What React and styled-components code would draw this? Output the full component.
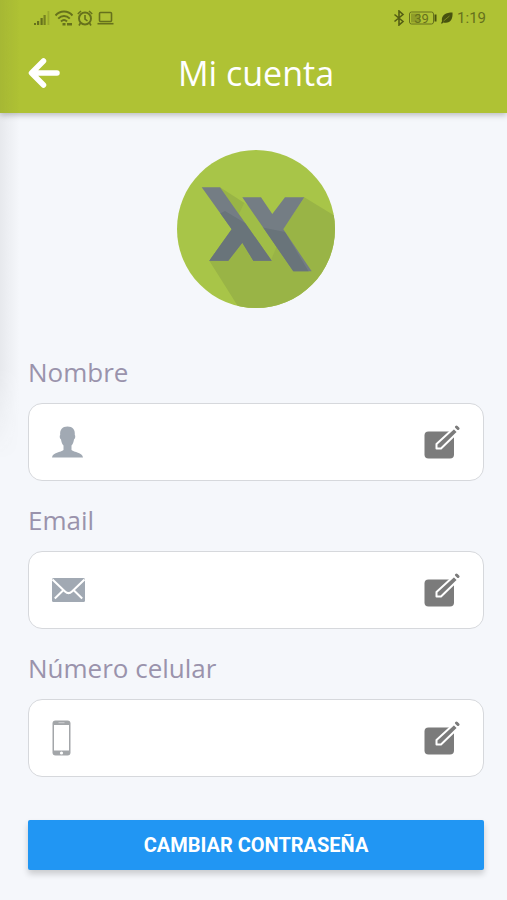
import React, { useState } from 'react';
import styled, { createGlobalStyle } from 'styled-components';

const GlobalStyle = createGlobalStyle`
  * { box-sizing: border-box; }
  body {
    margin: 0;
    background: #f5f7fb;
    font-family: 'Open Sans', 'Noto Sans', sans-serif;
  }
`;

const Page = styled.div`
  position: relative;
  min-height: 100vh;
`;

const DrawerShade = styled.div`
  position: absolute;
  left: 0;
  top: 0;
  width: 20px;
  height: 460px;
  pointer-events: none;
  background: linear-gradient(to right, rgba(60, 60, 60, 0.07), rgba(60, 60, 60, 0));
  mask-image: linear-gradient(to bottom, #000 80%, transparent);
`;

const Header = styled.header`
  height: 113px;
  background: #afc234;
  box-shadow: 0 2px 6px rgba(0, 0, 0, 0.25);
`;

const StatusBar = styled.div`
  display: flex;
  justify-content: space-between;
  align-items: center;
  height: 36px;
  padding: 0 21px 0 34px;
  color: #66711c;
  font-family: Roboto, sans-serif;
  font-size: 15px;
`;

const StatusGroup = styled.div`
  display: flex;
  align-items: center;
  gap: 4px;

  svg { display: block; }
`;

const TitleBar = styled.div`
  display: grid;
  grid-template-columns: 32px 1fr 32px;
  align-items: center;
  height: 74px;
  padding: 0 23px 0 28px;
`;

const BackButton = styled.button`
  padding: 0;
  border: 0;
  background: none;
  cursor: pointer;

  svg { display: block; }
`;

const Title = styled.h1`
  margin: 0;
  color: #fff;
  font-size: 34px;
  font-weight: 400;
  line-height: 44px;
  text-align: center;
`;

const Main = styled.main`
  padding: 37px 23px 28px 28px;
`;

const Profile = styled.div`
  display: flex;
  flex-direction: column;
  align-items: center;
  height: 204px;
`;

const Form = styled.form`
  display: flex;
  flex-direction: column;
`;

const Field = styled.div`
  margin-bottom: 21px;
`;

const Label = styled.label`
  display: block;
  margin-bottom: 13px;
  color: #9a93ac;
  font-size: 26px;
  line-height: 36px;
`;

const InputBox = styled.div`
  display: flex;
  align-items: center;
  height: 78px;
  padding: 0 23px;
  border: 1px solid #d6d8dc;
  border-radius: 14px;
  background: #fff;

  svg { display: block; flex: none; }
`;

const Input = styled.input`
  flex: 1;
  min-width: 0;
  height: 48px;
  padding: 0 16px;
  border: 0;
  outline: 0;
  background: none;
  color: #55596a;
  font: inherit;
  font-size: 22px;
`;

const EditButton = styled.button`
  padding: 0;
  border: 0;
  background: none;
  cursor: pointer;
`;

const SubmitButton = styled.button`
  height: 50px;
  margin-top: 22px;
  padding: 0 16px;
  border: 0;
  border-radius: 2px;
  background: #2196f3;
  box-shadow: 0 4px 6px rgba(0, 0, 0, 0.18);
  color: #fff;
  font-family: Roboto, sans-serif;
  font-size: 20px;
  font-weight: 700;
  text-transform: uppercase;
  cursor: pointer;
`;

const SignalIcon = () => (
  <svg width="17" height="16" viewBox="0 0 17 16" fill="currentColor">
    <path d="M0 13h2v2H0zM3 11h2.200v4H3zM6.500 8h2.200v7H6.500z" />
    <path d="M9.500 5h2.200v10H9.500z" opacity="0.8" />
    <path d="M13.500 1h1.800v14h-1.800z" opacity="0.3" />
  </svg>
);

const WifiIcon = () => (
  <svg width="18" height="16" viewBox="0 0 18 16" fill="none" stroke="currentColor" strokeWidth="2">
    <path d="M0.500 5.500C5 0 13 0 17.500 5.500" />
    <path d="M3.200 8.600c3.400-3.600 8.200-3.600 11.600 0" />
    <path d="M6 11.500c1.800-1.800 4.200-1.800 6 0" />
    <path d="M7.500 14.200h3M12 14.200h5" strokeWidth="2.400" />
  </svg>
);

const AlarmIcon = () => (
  <svg width="16" height="16" viewBox="0 0 16 16" fill="none" stroke="currentColor" strokeWidth="1.900">
    <circle cx="8" cy="8.500" r="6" />
    <path d="M8 5v4l2.500 2M0.800 4l3.200-3M15.200 4L12 1M3.500 13l-1.500 2.500M12.500 13l1.500 2.500" strokeWidth="1.600" />
  </svg>
);

const LaptopIcon = () => (
  <svg width="17" height="14" viewBox="0 0 17 14" fill="none" stroke="currentColor" strokeWidth="1.600">
    <rect x="2.500" y="1.500" width="12" height="9" rx="1" />
    <path d="M0.500 12.700h16" />
  </svg>
);

const BluetoothIcon = () => (
  <svg width="12" height="16" viewBox="0 0 12 16" fill="none" stroke="#545e14" strokeWidth="1.600">
    <path d="M1.500 4.500l8.500 7L6 15V1l4 3.500-8.500 7" />
  </svg>
);

const BatteryIcon = () => (
  <svg width="28" height="14" viewBox="0 0 28 14">
    <rect x="0.500" y="1" width="24" height="12" rx="2" fill="none" stroke="currentColor" />
    <rect x="2" y="2.500" width="9" height="9" fill="currentColor" opacity="0.45" />
    <path d="M25.500 3.500h2v7h-2z" fill="#48520f" />
    <text x="12.500" y="11.500" textAnchor="middle" fontSize="13" fill="currentColor">39</text>
  </svg>
);

const LeafIcon = () => (
  <svg width="12" height="12" viewBox="0 0 12 12">
    <path d="M11.500 0.500C5 0.500 0 3 1 9.200L0 11.300l1 .5 1.300-1.300C9.500 12 12 7 11.500 0.500z" fill="#48520f" />
    <path d="M2.500 9L8.500 4" stroke="#afc234" strokeWidth="0.500" />
  </svg>
);

const BackIcon = () => (
  <svg width="32" height="32" viewBox="0 0 32 32" fill="none" stroke="#fff" strokeWidth="5.500" strokeLinecap="round" strokeLinejoin="round">
    <path d="M15.500 4L3.500 16l12 12M4 16h25" />
  </svg>
);

const Logo = () => (
  <svg width="158" height="158" viewBox="0 0 158 158" role="img" aria-label="Logo">
    <defs>
      <clipPath id="disc"><circle cx="79" cy="79" r="79" /></clipPath>
      <clipPath id="glyphs">
        <path d="M24.700 37.300H43L94.700 110.700H76.300L65.300 92.700 51.300 110.700h-19L54.700 79.300z" />
        <path d="M65.300 47.300H84L95.300 64 108 47.300h19.300L106.300 79.300l28.400 42H116.300z" />
      </clipPath>
    </defs>
    <g clipPath="url(#disc)">
      <rect width="158" height="158" fill="#a8c548" />
      <path d="M43 37.300L69 54 106 79.300 127.300 47.300 158 66v92H62L32.300 110.700 54.700 79.300z" fill="#99b446" />
      <path d="M68 51L100 96 94 110 62 64z" fill="#a8c548" opacity="0.5" />
    </g>
    <g clipPath="url(#glyphs)">
      <rect width="158" height="158" fill="#747d84" />
      <path d="M40 65l8-4 20 12 20 5 20 4 30 50H20z" fill="#69747a" />
    </g>
  </svg>
);

const PersonIcon = () => (
  <svg width="31" height="32" viewBox="0 0 31 32" fill="#a1a9b3">
    <path d="M15.500 0.500c5.200 0 7.800 3 7.300 8.500.8.500.6 3.800-.8 4.600-.5 3-1.300 4.700-2.500 5.900v4.500c2.500 2.500 11 2.300 11.500 7.500H0c.5-5.200 9-5 11.500-7.500v-4.500c-1.200-1.200-2-2.900-2.500-5.900-1.400-.8-1.600-4.100-.8-4.600C7.700 3.500 10.300.5 15.500.5z" />
  </svg>
);

const MailIcon = () => (
  <svg width="33" height="24" viewBox="0 0 33 24">
    <rect width="33" height="24" rx="1.500" fill="#a1a9b3" />
    <path d="M0.500 1.500l12.500 12c2.300 2.200 4.700 2.200 7 0l12.500-12M11 12.500L2.800 20.500M22 12.500l8.200 8" fill="none" stroke="#fff" strokeWidth="2" />
  </svg>
);

const PhoneIcon = () => (
  <svg width="19" height="36" viewBox="0 0 19 36">
    <rect x="0.500" y="0.500" width="18" height="35" rx="3" fill="#a3a6a9" />
    <path d="M2 5h15v25.500H2z" fill="#fff" />
    <path d="M6.500 2.700h6" stroke="#cfd1d3" />
    <circle cx="9.500" cy="33" r="1.600" fill="#fff" />
  </svg>
);

const EditIcon = () => (
  <svg width="36" height="36" viewBox="0 0 36 36">
    <rect x="0.500" y="7.500" width="29.500" height="27" rx="4" fill="#7b7b7b" />
    <path d="M12.500 24.500v-4.500L30 4l4 4L17 24.500z" fill="#7b7b7b" stroke="#fff" strokeWidth="2" strokeLinejoin="round" />
    <path d="M32.500 3l1.500 1.500" stroke="#7b7b7b" strokeWidth="3" strokeLinecap="round" />
  </svg>
);

const fields = [
  { id: 'nombre', label: 'Nombre', type: 'text', Icon: PersonIcon },
  { id: 'email', label: 'Email', type: 'email', Icon: MailIcon },
  { id: 'celular', label: 'Número celular', type: 'tel', Icon: PhoneIcon },
];

export default function App() {
  const [values, setValues] = useState({ nombre: '', email: '', celular: '' });

  const change = (id, value) => setValues({ ...values, [id]: value });

  return (
    <>
      <GlobalStyle />
      <Page>
        <Header>
          <StatusBar>
            <StatusGroup>
              <SignalIcon />
              <WifiIcon />
              <AlarmIcon />
              <LaptopIcon />
            </StatusGroup>
            <StatusGroup>
              <BluetoothIcon />
              <BatteryIcon />
              <LeafIcon />
              <span>1:19</span>
            </StatusGroup>
          </StatusBar>
          <TitleBar>
            <BackButton type="button" aria-label="Volver">
              <BackIcon />
            </BackButton>
            <Title>Mi cuenta</Title>
          </TitleBar>
        </Header>
        <Main>
          <Profile>
            <Logo />
          </Profile>
          <Form onSubmit={(e) => e.preventDefault()}>
            {fields.map(({ id, label, type, Icon }) => (
              <Field key={id}>
                <Label htmlFor={id}>{label}</Label>
                <InputBox>
                  <Icon />
                  <Input
                    id={id}
                    type={type}
                    value={values[id]}
                    onChange={(e) => change(id, e.target.value)}
                  />
                  <EditButton
                    type="button"
                    aria-label={`Editar ${label}`}
                    onClick={() => document.getElementById(id).focus()}
                  >
                    <EditIcon />
                  </EditButton>
                </InputBox>
              </Field>
            ))}
            <SubmitButton type="submit">Cambiar contraseña</SubmitButton>
          </Form>
        </Main>
        <DrawerShade />
      </Page>
    </>
  );
}
